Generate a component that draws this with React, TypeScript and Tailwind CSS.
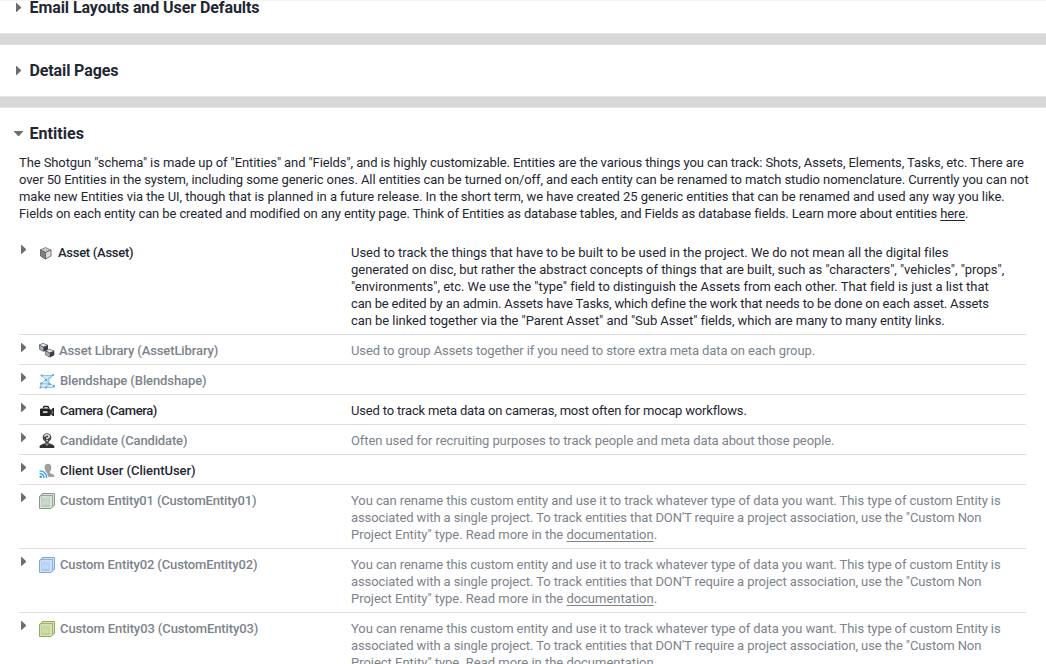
import type { ReactNode } from 'react';

type Line = { text: ReactNode; track: string };

function Lines({ lines }: { lines: Line[] }) {
  return (
    <>
      {lines.map((l, i) => (
        <div key={i} className={`whitespace-nowrap ${l.track}`}>{l.text}</div>
      ))}
    </>
  );
}

function RightArrow() {
  return (
    <svg className="block h-[9px] w-[5px] shrink-0" viewBox="0 0 5 9">
      <path d="M0 0h.6L5 4v1L.6 9H0z" fill="#6e6e6e" />
    </svg>
  );
}

function DownArrow() {
  return (
    <svg className="block h-[5px] w-[9px] shrink-0" viewBox="0 0 9 5">
      <path d="M0 0h9v.6L5 5H4L0 .6z" fill="#6e6e6e" />
    </svg>
  );
}

function Heading({ open, title, track }: { open?: boolean; title: string; track: string }) {
  return (
    <div className="flex h-5 items-center text-[16px] font-bold leading-5">
      <div className="flex w-[29.5px] justify-center pb-px pl-[7.5px]">{open ? <DownArrow /> : <RightArrow />}</div>
      <h2 className={`whitespace-nowrap ${track}`}>{title}</h2>
    </div>
  );
}

function Divider() {
  return <div className="h-3 border-y border-[#e3e3e3] bg-[#d8d8d8]" />;
}

function Cube() {
  return (
    <svg className="block size-4" viewBox="0 0 16 16">
      <path d="M6.500 2.500 1.500 4.800 6.500 7.600l5.500-2.600z" fill="#c9c9c9" stroke="#777" strokeWidth=".8" />
      <path d="M1.500 4.800 6.500 7.600v6.400l-5-3z" fill="#828282" stroke="#555" strokeWidth=".8" />
      <path d="M12 5 6.500 7.600v6.400l5.500-3z" fill="#dedede" stroke="#555" strokeWidth=".8" />
    </svg>
  );
}

function Cubes() {
  const cube = (
    <>
      <path d="M4 0 0 1.800v4.400L4.500 8.800 9 6.500V2z" fill="#3a3d45" />
      <path d="M4 .5.800 2l3.700 1.700 3.700-1.500z" fill="#dfe3ea" />
      <path d="M.4 2.600 4.400 4.300v3.900L.4 6z" fill="#a7adba" />
    </>
  );
  return (
    <svg className="block size-4" viewBox="0 0 16 16">
      {cube}
      <g transform="translate(6.300 5.800)">{cube}</g>
    </svg>
  );
}

function Blendshape() {
  return (
    <svg className="block size-4" viewBox="0 0 16 16" fill="none">
      <path d="M3 2h11l-4 6.500 2.500 3L15 14H1.500L1.800 10.500 6.500 7z" fill="#d5eaf7" />
      <path d="M2.500 2.500H14L9.500 6.500 10.500 11l4.500 1.500v2H1.500L2 10.500 7 6.800 2.500 2.500M7 6.800 13.500 2.500M2 10.500l8.500.5-4 3.500M7 6.800l3.500 4.200" stroke="#7fb8e0" strokeWidth=".8" />
      <g fill="#4f9bd0">
        <path d="M1.500 1.500h2v2h-2zM13 1h2v2h-2zM6 6h2v2H6zM1 9.500h2v2H1zM9.500 10h2v2h-2zM.5 13.500h2v2h-2zM6 13.500h2v2H6zM14 12h2v2h-2z" fillOpacity=".75" />
      </g>
    </svg>
  );
}

function Camera() {
  return (
    <svg className="block size-4" viewBox="0 0 16 16">
      <path d="M4.500 5.500V4.400Q4.500 3.500 5.500 3.500h3q1 0 1 1v1" fill="none" stroke="#222" strokeWidth="1.300" />
      <path d="M2 5.500h8.500Q11.500 5.500 11.500 6.500v1L13.800 5H15v8h-1.200L11.500 11v1q0 1-1 1H2q-1 0-1-1V6.500q0-1 1-1z" fill="#222" />
      <path d="M4 8.300h4.500v1.600H4z" fill="#eee" />
      <path d="M13.200 7.500v3.500" stroke="#bbb" strokeWidth=".8" />
    </svg>
  );
}

function Candidate() {
  return (
    <svg className="block size-4" viewBox="0 0 16 16">
      <path d="M.7 15V13.300Q1 11.600 6 10.300h4q5 1.300 5.300 3V15z" fill="#333" />
      <path d="M5.500 10.300h5l-2.500 2.700z" fill="#999" />
      <circle cx="8" cy="4.500" r="4.300" fill="#444" />
      <path d="M6.300 8h3.400v2.500H6.300z" fill="#444" />
      <path d="M5.700 3.700Q5.900 1.800 8 1.800t2.300 1.900Q10.200 4.600 8 5.300V6.300M8 7.100v1.200" fill="none" stroke="#e8edf0" strokeWidth="1.500" />
    </svg>
  );
}

function ClientUser() {
  return (
    <svg className="block size-4" viewBox="0 0 16 16">
      <path d="M5.500 4.500Q5.500.800 9 .800T12.300 4.500Q12.300 7 11 8.500v1.500l3.500 1.500q1 .5 1 2.500H9.300Q8.500 9.500 6.500 8z" fill="#a0a0a0" />
      <g fill="none" stroke="#35a5e0" strokeWidth="1.300">
        <path d="M.5 7.800Q7.500 8 7.700 15M.5 10.500Q5 10.700 5 15" />
      </g>
      <circle cx="1.700" cy="13.800" r="1.300" fill="#35a5e0" />
    </svg>
  );
}

function Stack({ edge, mid, light }: { edge: string; mid: string; light: string }) {
  return (
    <svg className="block size-4" viewBox="0 0 16 16">
      <path d="M3.500 .5h12V12L12 15.500H.500V3.500z" fill={mid} stroke={edge} />
      <path d="M4.500 1.500H14.500V11.500" fill="none" stroke={light} strokeWidth=".8" />
      <path d="M2.500 2.500h11v11" fill="none" stroke={edge} strokeWidth=".7" />
      <path d="M2.500 3.500H12.500V13.500" fill="none" stroke={light} strokeWidth=".8" />
      <path d="M1 4.500h10.500v10.500H1z" fill={mid} />
      <path d="M1.500 5H11.500V14.500H1.500z" fill="none" stroke={light} strokeWidth=".9" />
      <path d="M3 12V6.500H10V12z" fill={light} fillOpacity=".45" />
    </svg>
  );
}

const doc: Line[] = [
  { text: 'You can rename this custom entity and use it to track whatever type of data you want. This type of custom Entity is', track: 'tracking-[-0.08px]' },
  { text: 'associated with a single project. To track entities that DON\'T require a project association, use the "Custom Non', track: 'tracking-[-0.1px]' },
  { text: <>Project Entity" type. Read more in the <a className="underline underline-offset-2">documentation</a>.</>, track: 'tracking-[-0.02px]' },
];

const intro: Line[] = [
  { text: 'The Shotgun "schema" is made up of "Entities" and "Fields", and is highly customizable. Entities are the various things you can track: Shots, Assets, Elements, Tasks, etc. There are', track: 'tracking-[-0.096px]' },
  { text: 'over 50 Entities in the system, including some generic ones. All entities can be turned on/off, and each entity can be renamed to match studio nomenclature. Currently you can not', track: 'tracking-[-0.085px]' },
  { text: 'make new Entities via the UI, though that is planned in a future release. In the short term, we have created 25 generic entities that can be renamed and used any way you like.', track: 'tracking-[-0.038px]' },
  { text: <>Fields on each entity can be created and modified on any entity page. Think of Entities as database tables, and Fields as database fields. Learn more about entities <a className="underline underline-offset-2">here</a>.</>, track: 'tracking-[-0.105px]' },
];

type Entity = { name: string; icon: ReactNode; indent: string; nameTrack: string; active?: boolean; lines: Line[] };

const entities: Entity[] = [
  {
    name: 'Asset (Asset)', icon: <Cube />, indent: 'pl-[3px]', nameTrack: 'tracking-[-0.28px]', active: true,
    lines: [
      { text: 'Used to track the things that have to be built to be used in the project. We do not mean all the digital files', track: 'tracking-[-0.03px]' },
      { text: 'generated on disc, but rather the abstract concepts of things that are built, such as "characters", "vehicles", "props",', track: 'tracking-[-0.034px]' },
      { text: '"environments", etc. We use the "type" field to distinguish the Assets from each other. That field is just a list that', track: 'tracking-[-0.027px]' },
      { text: 'can be edited by an admin. Assets have Tasks, which define the work that needs to be done on each asset. Assets', track: 'tracking-[-0.16px]' },
      { text: 'can be linked together via the "Parent Asset" and "Sub Asset" fields, which are many to many entity links.', track: 'tracking-[-0.05px]' },
    ],
  },
  { name: 'Asset Library (AssetLibrary)', icon: <Cubes />, indent: 'pl-1', nameTrack: 'tracking-[-0.11px]', lines: [{ text: 'Used to group Assets together if you need to store extra meta data on each group.', track: 'tracking-[-0.1px]' }] },
  { name: 'Blendshape (Blendshape)', icon: <Blendshape />, indent: 'pl-[5px]', nameTrack: 'tracking-[-0.1px]', lines: [] },
  { name: 'Camera (Camera)', icon: <Camera />, indent: 'pl-[5px]', nameTrack: 'tracking-[-0.37px]', active: true, lines: [{ text: 'Used to track meta data on cameras, most often for mocap workflows.', track: 'tracking-[-0.175px]' }] },
  { name: 'Candidate (Candidate)', icon: <Candidate />, indent: 'pl-[5px]', nameTrack: 'tracking-[-0.14px]', lines: [{ text: 'Often used for recruiting purposes to track people and meta data about those people.', track: 'tracking-[-0.09px]' }] },
  { name: 'Client User (ClientUser)', icon: <ClientUser />, indent: 'pl-[5px]', nameTrack: 'tracking-[-0.03px]', active: true, lines: [] },
  { name: 'Custom Entity01 (CustomEntity01)', icon: <Stack edge="#86998a" mid="#b9c9bb" light="#e2ebe2" />, indent: 'pl-[5px]', nameTrack: 'tracking-[-0.16px]', lines: doc },
  { name: 'Custom Entity02 (CustomEntity02)', icon: <Stack edge="#7ba8d8" mid="#a9caee" light="#d9e9fa" />, indent: 'pl-[5px]', nameTrack: 'tracking-[-0.13px]', lines: doc },
  { name: 'Custom Entity03 (CustomEntity03)', icon: <Stack edge="#93a95a" mid="#bfcf90" light="#e0e9c4" />, indent: 'pl-[5px]', nameTrack: 'tracking-[-0.1px]', lines: doc },
];

function Row({ e }: { e: Entity }) {
  return (
    <div className={`flex border-b border-[#dedede] pt-[7px] pb-[5px] ${e.active ? 'text-[#1f2733]' : 'text-[#7d838b]'}`}>
      <div className="w-5 pl-0.5 pt-px"><RightArrow /></div>
      <div className="flex h-[17px] w-[312px]">
        <div className="w-4 pt-px">{e.icon}</div>
        <span className={`whitespace-nowrap font-medium ${e.indent} ${e.nameTrack}`}>{e.name}</span>
      </div>
      <div><Lines lines={e.lines} /></div>
    </div>
  );
}

export default function App() {
  return (
    <div className="h-[664px] w-[1046px] overflow-hidden border-t border-[#f4f4f4] bg-white font-['Roboto',sans-serif] text-[13px] leading-[17px] text-[#1f2733]">
      <div className="h-8 -mt-[3px] mb-[3px]"><Heading title="Email Layouts and User Defaults" track="tracking-[-0.08px]" /></div>
      <Divider />
      <div className="h-[51px] pt-4"><Heading title="Detail Pages" track="tracking-[-0.12px]" /></div>
      <Divider />
      <div className="pt-4">
        <Heading open title="Entities" track="tracking-[0.05px]" />
        <div className="mt-[10px] ml-[19px]"><Lines lines={intro} /></div>
        <div className="mt-[15px] ml-[19px] w-[1007px]">
          {entities.map((e) => <Row key={e.name} e={e} />)}
        </div>
      </div>
    </div>
  );
}
